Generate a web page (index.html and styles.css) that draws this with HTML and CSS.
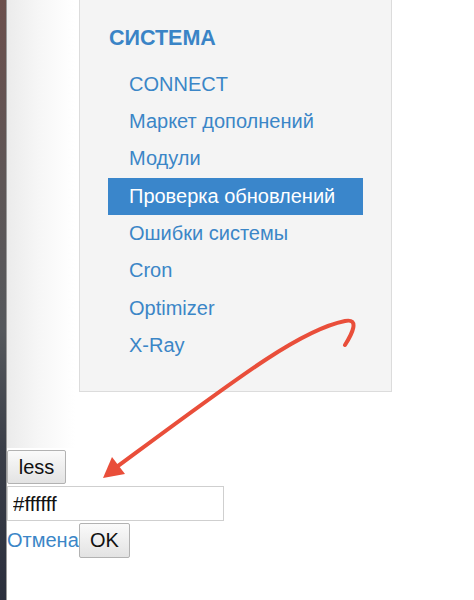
FILE: index.html
```html
<!DOCTYPE html>
<html lang="ru">
<head>
<meta charset="utf-8">
<title>Система</title>
<link rel="stylesheet" href="styles.css">
</head>
<body>
<div class="page">
  <div class="edge"></div>
  <div class="main">
    <div class="top">
      <nav class="panel">
        <h2 class="heading">СИСТЕМА</h2>
        <ul class="menu">
          <li><a class="item" href="#">CONNECT</a></li>
          <li><a class="item" href="#">Маркет дополнений</a></li>
          <li><a class="item" href="#">Модули</a></li>
          <li><a class="item active" href="#">Проверка обновлений</a></li>
          <li><a class="item" href="#">Ошибки системы</a></li>
          <li><a class="item" href="#">Cron</a></li>
          <li><a class="item" href="#">Optimizer</a></li>
          <li><a class="item" href="#">X-Ray</a></li>
        </ul>
      </nav>
    </div>
    <div class="controls">
      <button class="btn btn-less" type="button">less</button>
      <input class="color-input" type="text" value="#ffffff">
      <div class="actions">
        <a class="cancel" href="#">Отмена</a>
        <button class="btn btn-ok" type="button">OK</button>
      </div>
    </div>
  </div>
  <svg class="arrow" width="474" height="600" viewBox="0 0 474 600">
    <path d="M345 345 C352 334 360 318 345 321 C300 330 240 376 114 469" fill="none" stroke="#e94e3a" stroke-width="4" stroke-linecap="round"/>
    <polygon points="103,478 112,457 125,474" fill="#e94e3a"/>
  </svg>
</div>
</body>
</html>
```
FILE: styles.css
```css
* { box-sizing: border-box; }
html, body { margin: 0; padding: 0; }
body {
  background: #fff;
  font-family: "Liberation Sans", Arial, sans-serif;
}
.page {
  position: relative;
  display: flex;
  width: 474px;
  height: 600px;
  overflow: hidden;
}
.edge {
  width: 7px;
  flex: none;
  background: linear-gradient(to bottom, #6b4f4c 0%, #5e5656 30%, #55585c 55%, #3a3e48 75%, #2b2f3d 100%);
  border-right: 1px solid #9a9a9a;
}
.main {
  flex: 1;
  display: flex;
  flex-direction: column;
}
.top {
  height: 448px;
  background: linear-gradient(to right, #ebebeb 0px, #f6f6f6 30px, #fff 68px);
  padding-left: 72px;
}
.panel {
  width: 313px;
  height: 392px;
  background: #f4f4f4;
  border: 1px solid #dcdcdc;
  border-top: none;
  padding: 26px 0 0 28px;
}
.heading {
  margin: 0 0 15.5px 1px;
  font-size: 21.5px;
  line-height: 24px;
  font-weight: bold;
  color: #3a84c6;
}
.menu {
  list-style: none;
  margin: 0;
  padding: 0;
}
.item {
  display: block;
  width: 255px;
  height: 37.4px;
  line-height: 37.4px;
  padding-left: 21px;
  font-size: 20px;
  color: #3b86c7;
  text-decoration: none;
  white-space: nowrap;
}
.item.active {
  background: #3a86cb;
  color: #fff;
}
.controls {
  display: flex;
  flex-direction: column;
  align-items: flex-start;
  gap: 2px;
  padding-top: 2px;
}
.btn {
  font-family: "Liberation Sans", Arial, sans-serif;
  font-size: 20px;
  color: #111;
  background: linear-gradient(to bottom, #fafafa, #e3e3e3);
  border: 1px solid #b2b2b2;
  border-radius: 2px;
  padding: 0;
  height: 34px;
}
.btn-less { width: 59px; }
.color-input {
  width: 217px;
  height: 35px;
  border: 1px solid #cfcfcf;
  padding: 0 5px;
  font-family: "Liberation Sans", Arial, sans-serif;
  font-size: 20.5px;
  color: #111;
  background: #fff;
  outline: none;
}
.actions {
  display: flex;
  align-items: center;
}
.cancel {
  font-size: 20px;
  color: #3b86c7;
  text-decoration: none;
  width: 72px;
}
.btn-ok {
  width: 51px;
  height: 35px;
}
.arrow {
  position: absolute;
  left: 0;
  top: 0;
  pointer-events: none;
}
```
